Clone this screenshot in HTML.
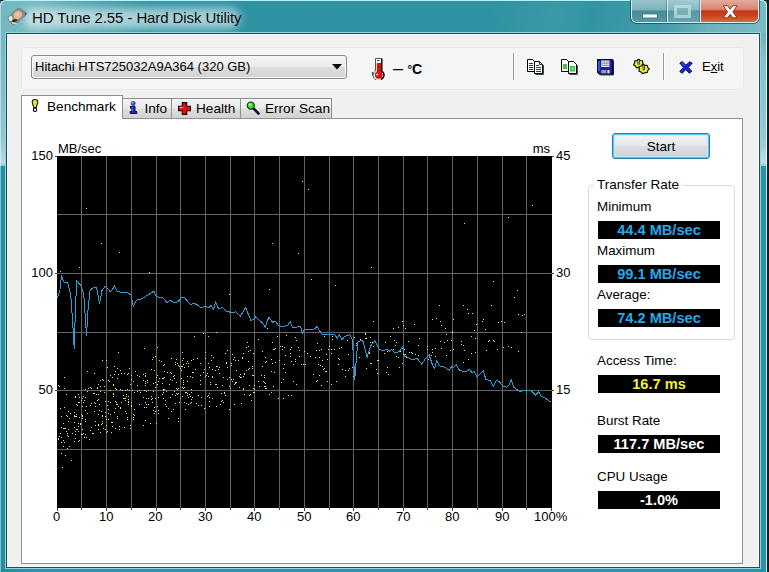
<!DOCTYPE html>
<html>
<head>
<meta charset="utf-8">
<title>HD Tune 2.55 - Hard Disk Utility</title>
<style>
html,body{margin:0;padding:0;}
body{width:769px;height:572px;overflow:hidden;position:relative;background:#0a2226;font-family:"Liberation Sans",sans-serif;font-size:13px;color:#000;}
.abs{position:absolute;}
#frame{left:0;top:0;width:767px;height:590px;border-radius:6px 6px 0 0;
 background:linear-gradient(90deg,#2a8aa0 0px,#23909c 6px,#2f93a2 40px,#2d92a1 100%);
 box-shadow:inset 0 1px 0 #b9f0f7, inset 1px 0 0 #7cc4d0, inset -1px 0 0 #b4eaf2;}
#leftglow{left:0;top:33px;width:7px;height:133px;background:linear-gradient(rgba(255,255,255,.36) 0,rgba(255,255,255,.42) 40%,rgba(255,255,255,.5) 80%,rgba(255,255,255,.68) 97%,rgba(255,255,255,.5) 100%);}
#rightglow{left:760px;top:34px;width:7px;height:132px;background:linear-gradient(rgba(255,255,255,.3) 0,rgba(255,255,255,.42) 20px,rgba(255,255,255,.5) 80%,rgba(255,255,255,.7) 97%,rgba(255,255,255,.5) 100%);}
#trglow{left:660px;top:1px;width:107px;height:33px;background:linear-gradient(90deg,rgba(255,255,255,0) 0,rgba(255,255,255,.22) 45%,rgba(255,255,255,.3) 100%);}
#streak{left:300px;top:2px;width:467px;height:31px;background:linear-gradient(100deg,rgba(255,255,255,0) 40%,rgba(255,255,255,.07) 55%,rgba(255,255,255,.02) 62%,rgba(255,255,255,.08) 72%,rgba(255,255,255,.10) 100%);}
#titleglow{left:24px;top:8px;width:216px;height:21px;border-radius:10px;background:rgba(255,255,255,.56);filter:blur(4.500px);}
#cornerglow{left:0;top:1px;width:160px;height:32px;background:linear-gradient(90deg,rgba(255,255,255,.37) 0,rgba(255,255,255,.36) 30px,rgba(255,255,255,.18) 80px,rgba(255,255,255,0) 150px);}
#title{left:32px;top:8px;font-size:15px;line-height:20px;white-space:nowrap;color:#0a0a0a;letter-spacing:-0.1px;}
#client{left:6px;top:33px;width:752px;height:533px;background:#f0f0f0;border:1px solid #1c4d55;box-shadow:0 0 0 1px #8fd6e0;}
#clientin{left:7px;top:34px;width:750px;height:531px;border:1px solid #fff;box-sizing:content-box;}
/* caption buttons */
#caps{left:631px;top:0;width:126px;height:22px;border:1px solid #cfeff4;border-top:none;border-radius:0 0 6px 6px;overflow:hidden;box-shadow:0 0 0 1px rgba(20,50,58,.6);}
#bmin{left:0;top:0;width:35px;height:22px;background:linear-gradient(#98c5cd 0%,#7bb1bb 45%,#468b97 50%,#5797a3 100%);}
#bmax{left:36px;top:0;width:32px;height:22px;background:linear-gradient(#a2ccd3 0%,#84b8c2 45%,#5797a2 50%,#68a3ae 100%);}
#bclose{left:69px;top:0;width:57px;height:22px;background:linear-gradient(#e4ab9b 0%,#d98570 42%,#c2361a 50%,#c9411f 70%,#db6a44 100%);}
.capsep{top:0;width:1px;height:22px;background:#cfeff4;box-shadow:-1px 0 0 rgba(30,70,80,.35);}
/* toolbar */
#toolbar{left:21px;top:47px;width:721px;height:41px;background:#f5f5f5;border:1px solid #e8e8e8;border-radius:3px;}
#combo{left:31px;top:55px;width:314px;height:22px;border:1px solid #8a8a8a;border-radius:3px;background:linear-gradient(#f4f4f4 0%,#ececec 48%,#dedede 52%,#d2d2d2 100%);box-shadow:inset 0 0 0 1px #fafafa;}
#combotext{left:35px;top:59px;line-height:16px;white-space:nowrap;}
.sep{width:1px;background:#9a9a9a;box-shadow:1px 0 0 #fff;}
/* tabs */
.tab{top:98px;height:20px;border:1px solid #8e8f94;border-bottom:none;background:linear-gradient(#f3f3f3 0%,#ebebeb 48%,#dedede 52%,#d2d2d2 100%);box-sizing:border-box;}
.tab span{position:absolute;top:2px;line-height:16px;white-space:nowrap;font-size:13.6px;}
#tabact{top:95px;height:24px;background:#fff;z-index:3;}
#panel{left:21px;top:118px;width:720px;height:444px;background:#fff;border:1px solid #8e8f94;}
/* chart */
#chart{left:57px;top:156px;width:495px;height:352px;background:#000;}
.lbl{line-height:14px;white-space:nowrap;}
.rl{font-size:13.4px;}
.r{text-align:right;}
/* right */
#start{left:612px;top:133px;width:96px;height:24px;border:1px solid #2f7ea8;border-radius:3px;background:linear-gradient(#f1f2f3 0%,#e8e9eb 46%,#dadcdf 52%,#cfd3d8 100%);box-shadow:inset 0 0 0 1px #52cbef, inset 0 0 0 2px rgba(190,236,250,.75);text-align:center;line-height:25px;font-size:13.5px;}
#group{left:588px;top:185px;width:145px;height:153px;border:1px solid #dadada;border-radius:4px;}
#grouplbl{left:594px;top:177px;padding:0 3px;background:#fff;line-height:15px;font-size:13.5px;}
.val{left:598px;width:122px;height:18px;background:#000;text-align:center;font-weight:bold;font-size:14.6px;line-height:18px;white-space:nowrap;}
.blue{color:#25a8ea;}
.yel{color:#f2f22c;}
.wht{color:#fff;}
</style>
</head>
<body>
<div id="frame" class="abs"></div>
<div id="leftglow" class="abs"></div>
<div id="rightglow" class="abs"></div>
<div id="streak" class="abs"></div>
<div id="trglow" class="abs"></div>
<div id="cornerglow" class="abs"></div>
<div id="titleglow" class="abs"></div>
<!-- app icon -->
<svg class="abs" style="left:6px;top:6px" width="24" height="22" viewBox="0 0 24 22">
 <path d="M2 11.500 L10.500 3 L13.500 2.300 L20.300 6.500 L20 9 L9.500 18.300 L6 18 L2.500 14.500 Z" fill="#8a8b88" stroke="#6f8288" stroke-width=".8" stroke-linejoin="round"/>
 <ellipse cx="11.800" cy="9" rx="4.600" ry="3.900" transform="rotate(-35 11.800 9)" fill="#dcb896"/>
 <ellipse cx="11.300" cy="8.200" rx="2.300" ry="1.800" transform="rotate(-35 11.300 8.200)" fill="#e8c8a8"/>
 <ellipse cx="4.600" cy="12.600" rx="1.900" ry="2.500" fill="#e6eef2"/>
 <ellipse cx="8.800" cy="14.600" rx="2.600" ry="1.300" transform="rotate(-12 8.800 14.600)" fill="#2c2a28"/>
 <path d="M6.500 17l4 .8" stroke="#d4dade" stroke-width="1.300" stroke-linecap="round"/>
 <path d="M19 7l1 1.500" stroke="#3a4a4a" stroke-width="1.200"/>
</svg>
<div id="title" class="abs">HD Tune 2.55 - Hard Disk Utility</div>

<div id="caps" class="abs">
 <div id="bmin" class="abs"></div>
 <div class="capsep abs" style="left:35px"></div>
 <div id="bmax" class="abs"></div>
 <div class="capsep abs" style="left:68px"></div>
 <div id="bclose" class="abs"></div>
 <svg class="abs" style="left:0;top:0" width="129" height="23" viewBox="0 0 129 23">
  <rect x="10.5" y="14" width="15" height="4" fill="#fff" stroke="#4d7f88" stroke-width="1"/>
  <rect x="43.500" y="6.500" width="14" height="10" fill="#7fb4be" stroke="#c4e0e6" stroke-width="3" opacity=".75"/>
  <path transform="translate(-1.800 .3)" d="M93 5.5 L97.5 5.5 L100 9 L102.5 5.5 L107 5.5 L102.6 11.5 L107 17.5 L102.5 17.5 L100 14 L97.5 17.5 L93 17.5 L97.4 11.5 Z" fill="#fff" stroke="#7d2a18" stroke-width=".9"/>
 </svg>
</div>

<div id="client" class="abs"></div>
<div id="clientin" class="abs"></div>

<div id="toolbar" class="abs"></div>
<div id="combo" class="abs"></div>
<div id="combotext" class="abs">Hitachi HTS725032A9A364 (320 GB)</div>
<svg class="abs" style="left:332px;top:64px" width="10" height="6" viewBox="0 0 10 6"><path d="M0 0H10L5 5.5Z" fill="#000"/></svg>

<!-- thermometer -->
<svg class="abs" style="left:371px;top:57px" width="15" height="23" viewBox="0 0 15 23">
 <path d="M4.500 1.500h6v12.500a4.600 4.600 0 0 1 2.500 4 4.500 4.500 0 0 1-11 0 4.600 4.600 0 0 1 2.500-4z" fill="#fdfdfd" stroke="#555" stroke-width="1"/>
 <path d="M10.800 1.500v12.700a4.600 4.600 0 0 1 2.200 3.800 4.500 4.500 0 0 1-3 4" fill="none" stroke="#111" stroke-width="1.500"/>
 <path d="M5.800 6h4.200v8.800a3.600 3.600 0 1 1-4.200 0z" fill="#d61010"/>
 <circle cx="7.600" cy="18" r="3.700" fill="#d61010"/>
 <path d="M6 3.500h2.500" stroke="#444" stroke-width="1"/>
 <circle cx="6.200" cy="17.600" r="1.100" fill="#ffc4c4"/>
 <path d="M1.500 15v3.500" stroke="#2a5a3a" stroke-width="1.200"/>
</svg>
<div class="abs" style="left:393px;top:58px;font-size:18px;line-height:20px;white-space:nowrap;">–</div>
<div class="abs" style="left:407.500px;top:61px;font-weight:bold;font-size:14px;line-height:16px;white-space:nowrap;"><span style="font-size:11.500px;position:relative;top:-1.500px">°</span>C</div>

<div class="sep abs" style="left:513px;top:53px;height:27px"></div>
<div class="sep abs" style="left:663px;top:53px;height:27px"></div>

<!-- copy icon -->
<svg class="abs" style="left:527px;top:59px" width="17" height="16" viewBox="0 0 17 16">
 <path d="M.5 .5h5l2 2v10h-7z" fill="#fff" stroke="#000"/>
 <path d="M2 4.500h4M2 6.500h4M2 8.500h4M2 10.500h4" stroke="#2a2ab8" stroke-width="1"/>
 <path d="M7.500 2.500h5l3 3v9h-8z" fill="#fff" stroke="#000"/>
 <path d="M12.500 2.500v3h3" fill="none" stroke="#000" stroke-width=".8"/>
 <path d="M16.500 6v9.500h-8" stroke="#444" fill="none"/>
 <path d="M9 6.500h3M9 8.500h5M9 10.500h5M9 12.500h5" stroke="#2a2ab8" stroke-width="1"/>
</svg>
<!-- copy-screenshot icon -->
<svg class="abs" style="left:561px;top:59px" width="17" height="16" viewBox="0 0 17 16">
 <path d="M.5 .5h5l2 2v10h-7z" fill="#fff" stroke="#000"/>
 <rect x="2" y="5" width="4" height="5" fill="#3cc83c"/>
 <path d="M7.5 2.500h5l3 3v9h-8z" fill="#fff" stroke="#000"/>
 <path d="M16.5 6v9.500h-8" stroke="#555" fill="none"/>
 <rect x="9" y="7" width="5" height="5.500" fill="#3cc83c"/>
 <rect x="10.500" y="8.500" width="2" height="2" fill="#9fe89f"/>
</svg>
<!-- floppy -->
<svg class="abs" style="left:596.500px;top:58.500px" width="18" height="17" viewBox="0 0 18 17">
 <path d="M.6 .6h15v14.600h-13l-2-2z" fill="#1a1cb2" stroke="#05053f" stroke-width="1.200"/>
 <path d="M16.500 1.500v14.400h-13" stroke="#1a1a2a" fill="none" stroke-width="1"/>
 <path d="M1.900 2v10" stroke="#4f9cf5" stroke-width="1"/>
 <rect x="4.200" y="1.400" width="8.200" height="6.600" fill="#ececec"/>
 <path d="M4.800 3h7M4.800 4.700h7M4.800 6.400h7" stroke="#868686" stroke-width=".9"/>
 <rect x="4.200" y="11" width="5.200" height="3.400" fill="#9c9c9c"/>
 <rect x="10.400" y="11" width="2.100" height="3.400" fill="#ededed"/>
</svg>
<!-- options icon -->
<svg class="abs" style="left:633px;top:58px" width="17" height="17" viewBox="0 0 17 17">
 <path d="M10.7 6.7L8.9 8.0L8.0 9.9L5.7 9.4L3.5 10.0L2.5 8.1L0.6 6.9L1.6 5.1L1.5 3.0L3.7 2.6L5.5 1.2L7.3 2.5L9.6 2.9L9.6 4.9Z" fill="#ecee30" stroke="#1a1a08" stroke-width="1.200" stroke-linejoin="round"/>
 <path d="M5.600 1.300v5.200" stroke="#222" stroke-width="2.400"/>
 <path d="M5.600 2v4" stroke="#b4b4ac" stroke-width="1"/>
 <path d="M16.2 11.0L14.7 12.6L14.2 14.7L11.8 14.7L9.6 15.6L8.1 14.0L5.9 13.1L6.5 11.0L5.9 8.9L8.1 8.0L9.6 6.4L11.8 7.3L14.2 7.3L14.7 9.4Z" fill="#ecee30" stroke="#1a1a08" stroke-width="1.200" stroke-linejoin="round"/>
 <path d="M10.800 6.600v5.600" stroke="#222" stroke-width="2.400"/>
 <path d="M10.800 7.300v4.300" stroke="#b4b4ac" stroke-width="1"/>
</svg>
<!-- exit X -->
<svg class="abs" style="left:679px;top:60.500px" width="14" height="13" viewBox="0 0 14 13">
 <path d="M.8 2 L3.300 .7 L6.900 4.200 L10.800 .7 L13.200 2.200 L9.300 6.400 L12.800 10.300 L10.300 12.200 L6.800 8.600 L3.200 12.200 L.8 10.600 L4.500 6.400 Z" fill="#1226cc" stroke="#040c66" stroke-width="1" stroke-linejoin="round"/>
 <path d="M3.200 2.200l2.600 2.600" stroke="#5a78ff" stroke-width=".8"/>
</svg>
<div class="abs" style="left:702px;top:59px;line-height:16px;white-space:nowrap;">E<span style="text-decoration:underline">x</span>it</div>

<!-- tabs -->
<div id="panel" class="abs"></div>
<div class="tab abs" id="tabact" style="left:21px;width:102px;"><span style="left:25px;top:3px">Benchmark</span></div>
<div class="tab abs" style="left:122px;width:50px;"><span style="left:21.500px">Info</span></div>
<div class="tab abs" style="left:171px;width:70px;"><span style="left:24px">Health</span></div>
<div class="tab abs" style="left:240px;width:92px;"><span style="left:24px">Error Scan</span></div>
<!-- tab icons -->
<svg class="abs" style="left:31px;top:98px;z-index:4" width="8" height="15" viewBox="0 0 8 15">
 <path d="M4 1.500C6.400 1.500 7.200 3.300 6.600 5.200L5.200 9.500H2.800L1.400 5.200C.8 3.300 1.600 1.500 4 1.500Z" fill="#e6ea28" stroke="#111" stroke-width="1.100"/>
 <circle cx="4" cy="11.800" r="1.700" fill="#fff" stroke="#111" stroke-width="1.100"/>
</svg>
<svg class="abs" style="left:129px;top:101px" width="9" height="13" viewBox="0 0 9 13">
 <circle cx="4.200" cy="2.300" r="2" fill="#2a58ea" stroke="#0a1a70" stroke-width=".6"/>
 <circle cx="3.600" cy="1.700" r=".9" fill="#8ec4ff"/>
 <path d="M1.500 5.200h4.500v5.300h1.800v2h-6.600v-2h1.700v-3.300h-1.400z" fill="#1020c4" stroke="#03063a" stroke-width=".9"/>
 <path d="M3.700 6v4.500" stroke="#4a78ff" stroke-width=".9"/>
</svg>
<svg class="abs" style="left:177.500px;top:101.500px" width="13" height="13" viewBox="0 0 13 13">
 <path d="M4.300 .6h4.400v3.700h3.700v4.400h-3.700v3.700h-4.400v-3.700h-3.700v-4.400h3.700z" fill="#de1212" stroke="#1c0000" stroke-width="1.100"/>
 <path d="M1.600 5.400h3.300" stroke="#fff" stroke-width="1" opacity=".85"/>
</svg>
<svg class="abs" style="left:246px;top:100.500px" width="15" height="14" viewBox="0 0 15 14">
 <path d="M7.500 7.500l5 5" stroke="#0c1440" stroke-width="2.600" stroke-linecap="round"/>
 <circle cx="4.800" cy="4.600" r="3.600" fill="#2fdc2f" stroke="#1a2a1a" stroke-width="1.100"/>
 <circle cx="4" cy="3.800" r="1.200" fill="#b8ffb8"/>
</svg>

<!-- chart -->
<svg id="chart" class="abs" width="495" height="352" viewBox="0 0 495 352" shape-rendering="crispEdges">
 <rect x="0" y="0" width="495" height="352" fill="#000"/>
 <path d="M24.5 0V352M49.5 0V352M74.5 0V352M99.5 0V352M123.5 0V352M148.5 0V352M173.5 0V352M197.5 0V352M222.5 0V352M247.5 0V352M272.5 0V352M296.5 0V352M321.5 0V352M346.5 0V352M370.5 0V352M395.5 0V352M420.5 0V352M445.5 0V352M469.5 0V352M0 58.5H495M0 117.5H495M0 176.5H495M0 234.5H495M0 293.5H495" stroke="#646464" stroke-width="1" fill="none"/>
 <path d="M153 228h1v1h-1zM239 228h1v1h-1zM59 246h1v1h-1zM23 268h1v1h-1zM86 241h1v1h-1zM98 226h1v1h-1zM116 220h1v1h-1zM56 237h1v1h-1zM30 215h1v1h-1zM80 229h1v1h-1zM411 157h1v1h-1zM132 238h1v1h-1zM124 222h1v1h-1zM319 213h1v1h-1zM299 189h1v1h-1zM1 282h1v1h-1zM120 207h1v1h-1zM228 199h1v1h-1zM12 262h1v1h-1zM124 210h1v1h-1zM106 236h1v1h-1zM168 197h1v1h-1zM172 221h1v1h-1zM41 273h1v1h-1zM187 218h1v1h-1zM70 233h1v1h-1zM100 219h1v1h-1zM63 233h1v1h-1zM10 260h1v1h-1zM370 193h1v1h-1zM214 203h1v1h-1zM123 212h1v1h-1zM35 277h1v1h-1zM68 244h1v1h-1zM93 267h1v1h-1zM242 200h1v1h-1zM43 276h1v1h-1zM378 192h1v1h-1zM52 225h1v1h-1zM137 180h1v1h-1zM260 224h1v1h-1zM186 232h1v1h-1zM164 245h1v1h-1zM134 236h1v1h-1zM258 201h1v1h-1zM3 252h1v1h-1zM184 247h1v1h-1zM383 165h1v1h-1zM109 235h1v1h-1zM3 277h1v1h-1zM120 233h1v1h-1zM233 197h1v1h-1zM37 217h1v1h-1zM127 246h1v1h-1zM220 180h1v1h-1zM127 231h1v1h-1zM229 179h1v1h-1zM163 248h1v1h-1zM176 223h1v1h-1zM126 202h1v1h-1zM339 186h1v1h-1zM24 244h1v1h-1zM309 212h1v1h-1zM67 242h1v1h-1zM196 236h1v1h-1zM60 262h1v1h-1zM189 191h1v1h-1zM118 206h1v1h-1zM216 193h1v1h-1zM144 241h1v1h-1zM183 221h1v1h-1zM11 280h1v1h-1zM17 271h1v1h-1zM148 202h1v1h-1zM234 191h1v1h-1zM186 220h1v1h-1zM352 196h1v1h-1zM2 280h1v1h-1zM204 219h1v1h-1zM361 199h1v1h-1zM291 198h1v1h-1zM444 165h1v1h-1zM87 234h1v1h-1zM151 220h1v1h-1zM261 208h1v1h-1zM313 207h1v1h-1zM154 204h1v1h-1zM20 249h1v1h-1zM51 257h1v1h-1zM121 262h1v1h-1zM88 219h1v1h-1zM187 238h1v1h-1zM134 233h1v1h-1zM172 253h1v1h-1zM77 236h1v1h-1zM70 263h1v1h-1zM26 246h1v1h-1zM370 190h1v1h-1zM181 204h1v1h-1zM395 176h1v1h-1zM207 230h1v1h-1zM216 230h1v1h-1zM209 205h1v1h-1zM241 191h1v1h-1zM384 169h1v1h-1zM384 192h1v1h-1zM151 207h1v1h-1zM170 211h1v1h-1zM313 181h1v1h-1zM63 214h1v1h-1zM97 251h1v1h-1zM190 186h1v1h-1zM346 198h1v1h-1zM7 251h1v1h-1zM146 177h1v1h-1zM107 215h1v1h-1zM126 224h1v1h-1zM415 157h1v1h-1zM155 213h1v1h-1zM269 215h1v1h-1zM14 304h1v1h-1zM32 283h1v1h-1zM17 259h1v1h-1zM47 236h1v1h-1zM134 204h1v1h-1zM195 219h1v1h-1zM406 206h1v1h-1zM375 193h1v1h-1zM53 219h1v1h-1zM168 239h1v1h-1zM98 242h1v1h-1zM155 242h1v1h-1zM60 222h1v1h-1zM74 250h1v1h-1zM49 269h1v1h-1zM98 200h1v1h-1zM68 234h1v1h-1zM108 244h1v1h-1zM148 196h1v1h-1zM119 232h1v1h-1zM87 251h1v1h-1zM256 218h1v1h-1zM100 250h1v1h-1zM28 254h1v1h-1zM166 221h1v1h-1zM101 241h1v1h-1zM167 237h1v1h-1zM60 248h1v1h-1zM201 183h1v1h-1zM226 223h1v1h-1zM28 278h1v1h-1zM119 203h1v1h-1zM80 235h1v1h-1zM395 175h1v1h-1zM262 194h1v1h-1zM69 238h1v1h-1zM177 248h1v1h-1zM17 266h1v1h-1zM206 225h1v1h-1zM238 203h1v1h-1zM150 217h1v1h-1zM24 258h1v1h-1zM101 254h1v1h-1zM265 204h1v1h-1zM440 193h1v1h-1zM8 272h1v1h-1zM72 212h1v1h-1zM410 153h1v1h-1zM25 260h1v1h-1zM6 290h1v1h-1zM29 250h1v1h-1zM172 230h1v1h-1zM138 213h1v1h-1zM178 226h1v1h-1zM418 196h1v1h-1zM164 237h1v1h-1zM111 252h1v1h-1zM42 254h1v1h-1zM91 242h1v1h-1zM71 217h1v1h-1zM11 273h1v1h-1zM19 273h1v1h-1zM429 194h1v1h-1zM186 233h1v1h-1zM394 184h1v1h-1zM69 240h1v1h-1zM227 191h1v1h-1zM419 168h1v1h-1zM296 220h1v1h-1zM195 212h1v1h-1zM28 263h1v1h-1zM96 254h1v1h-1zM461 195h1v1h-1zM104 205h1v1h-1zM38 265h1v1h-1zM275 183h1v1h-1zM233 200h1v1h-1zM281 202h1v1h-1zM152 245h1v1h-1zM234 239h1v1h-1zM87 192h1v1h-1zM331 218h1v1h-1zM236 208h1v1h-1zM70 261h1v1h-1zM248 208h1v1h-1zM26 240h1v1h-1zM34 271h1v1h-1zM417 174h1v1h-1zM119 237h1v1h-1zM58 232h1v1h-1zM63 251h1v1h-1zM96 227h1v1h-1zM115 238h1v1h-1zM140 202h1v1h-1zM348 172h1v1h-1zM431 185h1v1h-1zM179 226h1v1h-1zM182 231h1v1h-1zM144 249h1v1h-1zM6 267h1v1h-1zM169 206h1v1h-1zM177 201h1v1h-1zM208 230h1v1h-1zM53 258h1v1h-1zM89 248h1v1h-1zM21 246h1v1h-1zM126 226h1v1h-1zM75 234h1v1h-1zM30 257h1v1h-1zM126 226h1v1h-1zM208 201h1v1h-1zM184 221h1v1h-1zM265 210h1v1h-1zM116 253h1v1h-1zM74 219h1v1h-1zM76 261h1v1h-1zM333 180h1v1h-1zM59 233h1v1h-1zM268 215h1v1h-1zM312 197h1v1h-1zM147 213h1v1h-1zM406 189h1v1h-1zM330 211h1v1h-1zM336 172h1v1h-1zM19 248h1v1h-1zM121 265h1v1h-1zM136 216h1v1h-1zM41 268h1v1h-1zM27 244h1v1h-1zM118 239h1v1h-1zM113 241h1v1h-1zM266 213h1v1h-1zM55 266h1v1h-1zM54 276h1v1h-1zM40 232h1v1h-1zM5 311h1v1h-1zM88 264h1v1h-1zM88 225h1v1h-1zM114 217h1v1h-1zM236 225h1v1h-1zM43 230h1v1h-1zM201 225h1v1h-1zM426 163h1v1h-1zM41 243h1v1h-1zM141 239h1v1h-1zM90 226h1v1h-1zM197 236h1v1h-1zM259 194h1v1h-1zM107 208h1v1h-1zM36 277h1v1h-1zM49 204h1v1h-1zM101 257h1v1h-1zM389 199h1v1h-1zM54 266h1v1h-1zM274 197h1v1h-1zM447 166h1v1h-1zM18 278h1v1h-1zM288 220h1v1h-1zM221 242h1v1h-1zM11 255h1v1h-1zM17 260h1v1h-1zM133 240h1v1h-1zM260 187h1v1h-1zM174 209h1v1h-1zM80 219h1v1h-1zM275 180h1v1h-1zM33 231h1v1h-1zM95 246h1v1h-1zM161 213h1v1h-1zM191 213h1v1h-1zM158 228h1v1h-1zM27 281h1v1h-1zM362 182h1v1h-1zM156 201h1v1h-1zM214 215h1v1h-1zM108 248h1v1h-1zM71 246h1v1h-1zM217 216h1v1h-1zM106 234h1v1h-1zM303 183h1v1h-1zM134 243h1v1h-1zM214 236h1v1h-1zM141 249h1v1h-1zM347 193h1v1h-1zM461 158h1v1h-1zM50 249h1v1h-1zM71 248h1v1h-1zM165 244h1v1h-1zM21 246h1v1h-1zM151 180h1v1h-1zM114 202h1v1h-1zM1 283h1v1h-1zM106 222h1v1h-1zM225 193h1v1h-1zM82 220h1v1h-1zM21 285h1v1h-1zM49 263h1v1h-1zM212 238h1v1h-1zM246 208h1v1h-1zM269 198h1v1h-1zM393 194h1v1h-1zM22 261h1v1h-1zM182 220h1v1h-1zM179 214h1v1h-1zM208 206h1v1h-1zM20 273h1v1h-1zM49 276h1v1h-1zM228 216h1v1h-1zM411 203h1v1h-1zM124 214h1v1h-1zM25 273h1v1h-1zM262 201h1v1h-1zM130 205h1v1h-1zM414 197h1v1h-1zM281 208h1v1h-1zM100 228h1v1h-1zM196 197h1v1h-1zM328 186h1v1h-1zM396 193h1v1h-1zM302 201h1v1h-1zM320 217h1v1h-1zM45 267h1v1h-1zM436 184h1v1h-1zM25 278h1v1h-1zM17 256h1v1h-1zM313 186h1v1h-1zM227 208h1v1h-1zM56 228h1v1h-1zM191 190h1v1h-1zM109 250h1v1h-1zM41 228h1v1h-1zM117 219h1v1h-1zM6 284h1v1h-1zM72 234h1v1h-1zM226 212h1v1h-1zM371 203h1v1h-1zM351 185h1v1h-1zM94 213h1v1h-1zM192 229h1v1h-1zM374 199h1v1h-1zM159 210h1v1h-1zM128 236h1v1h-1zM106 242h1v1h-1zM90 224h1v1h-1zM37 255h1v1h-1zM178 227h1v1h-1zM28 265h1v1h-1zM18 240h1v1h-1zM133 220h1v1h-1zM131 248h1v1h-1zM77 253h1v1h-1zM89 251h1v1h-1zM126 232h1v1h-1zM250 197h1v1h-1zM115 224h1v1h-1zM53 246h1v1h-1zM165 229h1v1h-1zM191 195h1v1h-1zM414 180h1v1h-1zM129 207h1v1h-1zM170 194h1v1h-1zM29 281h1v1h-1zM107 221h1v1h-1zM99 267h1v1h-1zM238 181h1v1h-1zM107 233h1v1h-1zM215 207h1v1h-1zM244 208h1v1h-1zM339 200h1v1h-1zM78 215h1v1h-1zM215 186h1v1h-1zM61 196h1v1h-1zM64 217h1v1h-1zM21 267h1v1h-1zM98 231h1v1h-1zM33 231h1v1h-1zM114 255h1v1h-1zM30 235h1v1h-1zM19 260h1v1h-1zM125 210h1v1h-1zM89 242h1v1h-1zM432 184h1v1h-1zM37 237h1v1h-1zM58 252h1v1h-1zM167 236h1v1h-1zM70 218h1v1h-1zM192 212h1v1h-1zM15 277h1v1h-1zM130 237h1v1h-1zM155 221h1v1h-1zM77 259h1v1h-1zM7 286h1v1h-1zM118 208h1v1h-1zM31 232h1v1h-1zM130 220h1v1h-1zM46 272h1v1h-1zM316 165h1v1h-1zM86 218h1v1h-1zM106 209h1v1h-1zM341 201h1v1h-1zM135 216h1v1h-1zM25 242h1v1h-1zM45 260h1v1h-1zM33 249h1v1h-1zM404 188h1v1h-1zM36 237h1v1h-1zM86 269h1v1h-1zM253 200h1v1h-1zM425 165h1v1h-1zM320 204h1v1h-1zM152 250h1v1h-1zM390 184h1v1h-1zM66 239h1v1h-1zM28 241h1v1h-1zM25 250h1v1h-1zM242 194h1v1h-1zM37 246h1v1h-1zM173 232h1v1h-1zM6 267h1v1h-1zM110 216h1v1h-1zM361 189h1v1h-1zM38 247h1v1h-1zM9 238h1v1h-1zM121 232h1v1h-1zM34 247h1v1h-1zM10 292h1v1h-1zM197 229h1v1h-1zM125 240h1v1h-1zM264 193h1v1h-1zM45 223h1v1h-1zM45 265h1v1h-1zM299 187h1v1h-1zM341 171h1v1h-1zM97 257h1v1h-1zM147 252h1v1h-1zM218 192h1v1h-1zM51 253h1v1h-1zM151 239h1v1h-1zM50 275h1v1h-1zM62 270h1v1h-1zM207 219h1v1h-1zM51 245h1v1h-1zM160 231h1v1h-1zM285 213h1v1h-1zM118 247h1v1h-1zM82 234h1v1h-1zM271 193h1v1h-1zM126 228h1v1h-1zM356 203h1v1h-1zM396 163h1v1h-1zM308 182h1v1h-1zM102 222h1v1h-1zM51 263h1v1h-1zM314 207h1v1h-1zM44 268h1v1h-1zM378 200h1v1h-1zM143 219h1v1h-1zM375 196h1v1h-1zM12 290h1v1h-1zM284 191h1v1h-1zM4 286h1v1h-1zM96 235h1v1h-1zM26 277h1v1h-1zM68 255h1v1h-1zM94 240h1v1h-1zM41 258h1v1h-1zM94 243h1v1h-1zM191 205h1v1h-1zM4 271h1v1h-1zM141 239h1v1h-1zM259 225h1v1h-1zM234 205h1v1h-1zM183 218h1v1h-1zM131 207h1v1h-1zM43 235h1v1h-1zM45 204h1v1h-1zM297 181h1v1h-1zM205 195h1v1h-1zM73 269h1v1h-1zM159 176h1v1h-1zM4 260h1v1h-1zM290 184h1v1h-1zM288 214h1v1h-1zM71 240h1v1h-1zM42 248h1v1h-1zM342 211h1v1h-1zM102 204h1v1h-1zM202 230h1v1h-1zM57 256h1v1h-1zM349 201h1v1h-1zM226 242h1v1h-1zM88 227h1v1h-1zM209 232h1v1h-1zM76 258h1v1h-1zM233 193h1v1h-1zM67 271h1v1h-1zM135 221h1v1h-1zM170 223h1v1h-1zM6 272h1v1h-1zM2 230h1v1h-1zM388 172h1v1h-1zM329 216h1v1h-1zM71 243h1v1h-1zM121 209h1v1h-1zM264 229h1v1h-1zM357 168h1v1h-1zM105 227h1v1h-1zM40 231h1v1h-1zM74 223h1v1h-1zM22 284h1v1h-1zM239 184h1v1h-1zM312 196h1v1h-1zM126 208h1v1h-1zM34 232h1v1h-1zM67 217h1v1h-1zM22 246h1v1h-1zM336 193h1v1h-1zM338 189h1v1h-1zM267 212h1v1h-1zM277 193h1v1h-1zM88 217h1v1h-1zM241 191h1v1h-1zM345 192h1v1h-1zM346 169h1v1h-1zM327 197h1v1h-1zM379 162h1v1h-1zM175 198h1v1h-1zM207 221h1v1h-1zM91 234h1v1h-1zM11 265h1v1h-1zM11 280h1v1h-1zM152 211h1v1h-1zM101 225h1v1h-1zM128 253h1v1h-1zM50 211h1v1h-1zM44 255h1v1h-1zM99 221h1v1h-1zM41 238h1v1h-1zM160 210h1v1h-1zM192 239h1v1h-1zM223 190h1v1h-1zM65 234h1v1h-1zM64 246h1v1h-1zM105 238h1v1h-1zM308 177h1v1h-1zM127 211h1v1h-1zM406 149h1v1h-1zM139 247h1v1h-1zM345 165h1v1h-1zM68 242h1v1h-1zM133 247h1v1h-1zM174 207h1v1h-1zM169 207h1v1h-1zM73 228h1v1h-1zM45 259h1v1h-1zM207 226h1v1h-1zM48 260h1v1h-1zM71 245h1v1h-1zM9 275h1v1h-1zM343 195h1v1h-1zM73 272h1v1h-1zM120 238h1v1h-1zM55 221h1v1h-1zM18 260h1v1h-1zM208 227h1v1h-1zM218 206h1v1h-1zM7 272h1v1h-1zM343 195h1v1h-1zM159 228h1v1h-1zM345 207h1v1h-1zM196 219h1v1h-1zM152 237h1v1h-1zM131 241h1v1h-1zM17 285h1v1h-1zM337 184h1v1h-1zM106 209h1v1h-1zM197 233h1v1h-1zM48 245h1v1h-1zM89 235h1v1h-1zM41 269h1v1h-1zM263 209h1v1h-1zM46 224h1v1h-1zM185 201h1v1h-1zM148 220h1v1h-1zM74 249h1v1h-1zM106 233h1v1h-1zM7 232h1v1h-1zM238 205h1v1h-1zM60 212h1v1h-1zM383 185h1v1h-1zM267 180h1v1h-1zM150 240h1v1h-1zM61 218h1v1h-1zM83 236h1v1h-1zM113 223h1v1h-1zM96 201h1v1h-1zM274 193h1v1h-1zM178 204h1v1h-1zM55 270h1v1h-1zM272 190h1v1h-1zM467 158h1v1h-1zM446 191h1v1h-1zM113 216h1v1h-1zM117 222h1v1h-1zM10 279h1v1h-1zM437 185h1v1h-1zM274 228h1v1h-1zM382 149h1v1h-1zM131 210h1v1h-1zM58 272h1v1h-1zM76 225h1v1h-1zM193 194h1v1h-1zM330 195h1v1h-1zM154 199h1v1h-1zM122 210h1v1h-1zM59 248h1v1h-1zM136 203h1v1h-1zM454 191h1v1h-1zM194 244h1v1h-1zM177 228h1v1h-1zM195 210h1v1h-1zM149 219h1v1h-1zM76 263h1v1h-1zM21 270h1v1h-1zM143 228h1v1h-1zM295 211h1v1h-1zM186 197h1v1h-1zM48 273h1v1h-1zM143 224h1v1h-1zM465 159h1v1h-1zM18 241h1v1h-1zM315 186h1v1h-1zM162 211h1v1h-1zM56 238h1v1h-1zM134 246h1v1h-1zM7 221h1v1h-1zM146 216h1v1h-1zM119 226h1v1h-1zM225 190h1v1h-1zM418 182h1v1h-1zM91 248h1v1h-1zM130 225h1v1h-1zM60 260h1v1h-1zM95 242h1v1h-1zM451 190h1v1h-1zM354 196h1v1h-1zM38 250h1v1h-1zM8 299h1v1h-1zM100 191h1v1h-1zM21 275h1v1h-1zM63 252h1v1h-1zM9 259h1v1h-1zM143 207h1v1h-1zM57 218h1v1h-1zM270 203h1v1h-1zM185 202h1v1h-1zM279 225h1v1h-1zM28 233h1v1h-1zM111 262h1v1h-1zM69 257h1v1h-1zM291 214h1v1h-1zM58 245h1v1h-1zM86 224h1v1h-1zM162 217h1v1h-1zM121 237h1v1h-1zM428 173h1v1h-1zM224 226h1v1h-1zM129 236h1v1h-1zM159 250h1v1h-1zM155 220h1v1h-1zM308 178h1v1h-1zM23 267h1v1h-1zM48 256h1v1h-1zM129 247h1v1h-1zM117 235h1v1h-1zM53 234h1v1h-1zM21 238h1v1h-1zM62 273h1v1h-1zM193 238h1v1h-1zM61 250h1v1h-1zM56 229h1v1h-1zM48 273h1v1h-1zM176 203h1v1h-1zM152 241h1v1h-1zM262 219h1v1h-1zM19 258h1v1h-1zM43 224h1v1h-1zM25 262h1v1h-1zM74 246h1v1h-1zM321 204h1v1h-1zM4 281h1v1h-1zM22 241h1v1h-1zM38 269h1v1h-1zM389 178h1v1h-1zM105 222h1v1h-1zM282 203h1v1h-1zM135 241h1v1h-1zM231 239h1v1h-1zM282 192h1v1h-1zM441 166h1v1h-1zM13 257h1v1h-1zM387 186h1v1h-1zM112 228h1v1h-1zM130 239h1v1h-1zM95 203h1v1h-1zM208 232h1v1h-1zM121 237h1v1h-1zM10 277h1v1h-1zM153 226h1v1h-1zM375 163h1v1h-1zM175 225h1v1h-1zM88 246h1v1h-1zM348 198h1v1h-1zM97 214h1v1h-1zM316 190h1v1h-1zM125 196h1v1h-1zM18 282h1v1h-1zM247 195h1v1h-1zM18 275h1v1h-1zM10 260h1v1h-1zM58 215h1v1h-1zM404 185h1v1h-1zM40 244h1v1h-1zM205 210h1v1h-1zM270 225h1v1h-1zM24 278h1v1h-1zM292 212h1v1h-1zM82 248h1v1h-1zM1 229h1v1h-1zM4 297h1v1h-1zM196 232h1v1h-1zM98 255h1v1h-1zM33 274h1v1h-1zM123 242h1v1h-1zM88 220h1v1h-1zM355 197h1v1h-1zM309 182h1v1h-1zM39 238h1v1h-1zM187 217h1v1h-1zM358 198h1v1h-1zM125 231h1v1h-1zM222 204h1v1h-1zM210 172h1v1h-1zM166 246h1v1h-1zM189 214h1v1h-1zM158 214h1v1h-1zM174 223h1v1h-1zM56 240h1v1h-1zM122 246h1v1h-1zM407 194h1v1h-1zM25 259h1v1h-1zM217 193h1v1h-1zM464 176h1v1h-1zM66 242h1v1h-1zM88 229h1v1h-1zM106 234h1v1h-1zM47 230h1v1h-1zM51 224h1v1h-1zM57 210h1v1h-1zM125 204h1v1h-1zM29 52h1v1h-1zM44 87h1v1h-1zM62 96h1v1h-1zM22 111h1v1h-1zM3 115h1v1h-1zM92 116h1v1h-1zM245 25h1v1h-1zM251 33h1v1h-1zM215 87h1v1h-1zM241 97h1v1h-1zM212 133h1v1h-1zM172 138h1v1h-1zM314 111h1v1h-1zM254 123h1v1h-1zM278 129h1v1h-1zM407 67h1v1h-1zM451 61h1v1h-1zM475 49h1v1h-1zM436 125h1v1h-1zM460 134h1v1h-1zM457 141h1v1h-1zM434 149h1v1h-1z" fill="#e8e47c"/>
 <polyline points="0.6,141.6 2.9,134.6 4.5,119.7 6.7,125.9 10.6,126.7 13.7,139.0 15.5,163.4 17.2,192.3 18.6,147.7 19.9,124.6 24.2,130.2 26.8,139.0 29.5,179.2 31.2,151.2 33.0,134.6 35.6,132.0 39.6,131.6 42.6,147.7 44.9,134.6 48.3,130.2 53.1,135.5 54.8,134.6 57.4,129.9 60.1,135.5 64.4,136.3 69.7,136.3 74.0,139.0 76.3,150.3 79.3,144.2 85.4,142.5 92.4,138.1 96.8,135.1 99.4,140.7 106.4,142.1 109.9,146.8 113.4,144.2 116.9,146.5 120.4,146.0 124.7,141.6 127.4,141.6 133.5,148.6 137.0,147.2 140.5,149.0 144.0,151.6 148.3,150.4 151.8,151.6 154.1,149.5 156.6,153.3 158.5,145.8 161.5,152.5 165.8,151.6 169.3,155.1 175.4,156.8 178.9,155.6 183.3,160.3 188.6,151.6 193.8,164.3 197.3,163.0 198.5,160.3 201.7,163.8 205.2,166.4 208.3,171.3 211.8,161.2 215.7,166.4 218.3,165.2 221.8,169.9 226.1,170.3 230.5,169.6 233.1,165.6 235.8,171.7 243.6,170.3 245.4,177.8 247.5,173.1 253.2,173.9 257.6,172.8 259.9,170.4 264.6,178.0 270.7,178.6 277.7,178.6 280.3,182.6 282.1,178.6 285.1,183.8 287.3,180.9 292.6,178.6 294.9,182.1 296.1,195.2 297.8,223.2 299.6,198.7 301.0,185.6 305.7,184.3 310.1,201.3 313.6,189.9 317.9,184.7 322.3,193.4 325.8,194.8 330.2,193.4 332.8,195.2 334.5,193.8 338.0,196.9 342.4,195.5 345.9,189.9 347.3,200.1 351.1,201.3 355.5,203.9 359.9,202.2 364.8,208.3 368.6,202.2 372.1,198.7 375.6,209.2 377.4,213.0 379.6,204.6 382.6,209.8 387.0,210.9 392.2,214.3 394.9,210.3 396.6,211.2 399.2,208.6 402.7,214.7 408.8,215.6 412.3,213.5 415.0,216.4 417.0,215.2 419.9,220.8 426.3,214.7 428.9,223.4 433.3,224.8 436.3,230.4 439.1,224.8 442.1,225.2 445.6,230.1 449.9,231.3 452.5,228.7 454.3,223.4 456.9,231.3 462.2,235.3 470.9,234.3 474.4,234.8 478.8,239.2 481.4,235.3 484.0,240.0 489.3,242.7 493.6,246.2" fill="none" stroke="#2c9fd8" stroke-width="1" shape-rendering="crispEdges" stroke-linejoin="round"/>
</svg>
<!-- axis ticks -->
<svg class="abs" style="left:53px;top:150px" width="505" height="365" viewBox="0 0 505 365" shape-rendering="crispEdges">
 <path d="M2 6.500h2M2 123.500h2M2 240.500h2M499 6.500h2M499 123.500h2M499 240.500h2" stroke="#444" stroke-width="1"/>
 <path d="M4.5 358v3M28.5 358v2M53.5 358v3M78.5 358v2M103.5 358v3M127.5 358v2M152.5 358v3M177.5 358v2M201.5 358v3M226.5 358v2M251.5 358v3M276.5 358v2M300.5 358v3M325.5 358v2M350.5 358v3M374.5 358v2M399.5 358v3M424.5 358v2M449.5 358v3M473.5 358v2M498.5 358v3" stroke="#444" stroke-width="1"/>
</svg>
<div class="lbl abs" style="left:58px;top:142px">MB/sec</div>
<div class="lbl abs r" style="left:500px;width:50px;top:142px">ms</div>
<div class="lbl abs r" style="left:10px;width:43px;top:149px">150</div>
<div class="lbl abs r" style="left:10px;width:43px;top:266px">100</div>
<div class="lbl abs r" style="left:10px;width:43px;top:383px">50</div>
<div class="lbl abs" style="left:556px;top:149px">45</div>
<div class="lbl abs" style="left:556px;top:266px">30</div>
<div class="lbl abs" style="left:556px;top:383px">15</div>
<div class="lbl abs" style="left:53px;top:510px">0</div>
<div class="lbl abs" style="left:99px;top:510px">10</div>
<div class="lbl abs" style="left:148px;top:510px">20</div>
<div class="lbl abs" style="left:198px;top:510px">30</div>
<div class="lbl abs" style="left:247px;top:510px">40</div>
<div class="lbl abs" style="left:297px;top:510px">50</div>
<div class="lbl abs" style="left:346px;top:510px">60</div>
<div class="lbl abs" style="left:396px;top:510px">70</div>
<div class="lbl abs" style="left:445px;top:510px">80</div>
<div class="lbl abs" style="left:495px;top:510px">90</div>
<div class="lbl abs" style="left:534px;top:510px">100%</div>

<!-- right side -->
<div id="start" class="abs">Start</div>
<div id="group" class="abs"></div>
<div id="grouplbl" class="abs">Transfer Rate</div>
<div class="lbl rl abs" style="left:597px;top:200px">Minimum</div>
<div class="val abs blue" style="top:221px">44.4 MB/sec</div>
<div class="lbl rl abs" style="left:597px;top:244px">Maximum</div>
<div class="val abs blue" style="top:265px">99.1 MB/sec</div>
<div class="lbl rl abs" style="left:597px;top:288px">Average:</div>
<div class="val abs blue" style="top:309px">74.2 MB/sec</div>
<div class="lbl rl abs" style="left:597px;top:354px">Access Time:</div>
<div class="val abs yel" style="top:375px">16.7 ms</div>
<div class="lbl rl abs" style="left:597px;top:414px">Burst Rate</div>
<div class="val abs wht" style="top:435px">117.7 MB/sec</div>
<div class="lbl rl abs" style="left:597px;top:470px">CPU Usage</div>
<div class="val abs wht" style="top:491px">-1.0%</div>
</body>
</html>
